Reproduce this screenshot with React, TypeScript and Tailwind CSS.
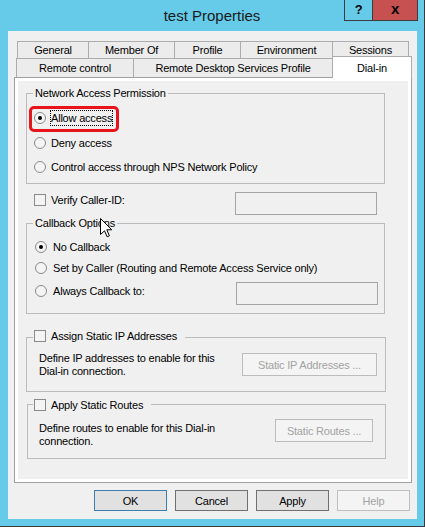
import React from "react";

const font = { fontFamily: '"Liberation Sans", Arial, sans-serif' };

const Radio = ({ checked }: { checked?: boolean }) => (
  <span className="flex h-[12px] w-[12px] shrink-0 items-center justify-center rounded-full border border-[#8a8a8a] bg-[#f4f4f4]">
    {checked && <span className="h-[4px] w-[4px] rounded-full bg-black" />}
  </span>
);

const Check = () => (
  <span className="h-[12px] w-[12px] shrink-0 border border-[#8a8a8a] bg-[#f4f4f4]" />
);

const TextBox = () => <div className="h-[23px] w-[142px] border border-[#a5a5a5] bg-[#f0f0f0]" />;

const DisabledButton = ({ label, className }: { label: string; className: string }) => (
  <div
    className={`flex h-[23px] shrink-0 items-center justify-center border border-[#bcbcbc] bg-[#f4f4f4] text-[#a3a3a3] ${className}`}
  >
    {label}
  </div>
);

const Tab = ({ label, w, h }: { label: string; w: string; h: string }) => (
  <div
    className={`-ml-px flex items-center justify-center border-x border-t border-[#acacac] bg-[#ececec] first:ml-0 ${w} ${h}`}
  >
    {label}
  </div>
);

const Cursor = () => (
  <svg width="13" height="20" viewBox="0 0 13 20" className="absolute left-[100px] top-[218px]">
    <path
      d="M0.5 0.5 L0.5 16.5 L4.5 12.8 L7.2 18.8 L9.4 17.8 L6.8 11.8 L11.8 11.8 Z"
      fill="#fff"
      stroke="#000"
      strokeWidth="1"
    />
  </svg>
);

export default function App() {
  return (
    <div
      className="relative flex h-[527px] w-[425px] flex-col border-r border-b border-[#3a3a3a] bg-[#65cbe9] text-[11px] leading-[14px] tracking-[-0.2px] text-black"
      style={font}
    >
      {/* title bar */}
      <div className="relative flex h-[31px] shrink-0 items-center justify-center">
        <span className="text-[15px] tracking-normal text-[#1a1a1a]">test Properties</span>
        <div className="absolute right-[6px] top-0 flex h-[21px]">
          <div className="flex w-[29px] items-center justify-center border-x border-b border-[#3c3c3c] text-[13px] font-bold">
            ?
          </div>
          <div className="-ml-px flex w-[46px] items-center justify-center border-x border-b border-[#3c3c3c] bg-[#c75050] pb-[2px] text-[15px] font-bold">
            x
          </div>
        </div>
      </div>

      {/* client area */}
      <div className="ml-[8px] flex h-[488px] w-[409px] flex-col bg-[#f0f0f0]">
        {/* tabs */}
        <div className="relative mt-[10px] flex flex-col">
          <div className="flex pl-[9px]">
            <Tab label="General" w="w-[72px]" h="h-[17px]" />
            <Tab label="Member Of" w="w-[87px]" h="h-[17px]" />
            <Tab label="Profile" w="w-[67px]" h="h-[17px]" />
            <Tab label="Environment" w="w-[93px]" h="h-[17px]" />
            <Tab label="Sessions" w="w-[77px]" h="h-[17px]" />
          </div>
          <div className="flex h-[19px] items-end pl-[8px]">
            <Tab label="Remote control" w="w-[118px]" h="h-[19px]" />
            <Tab label="Remote Desktop Services Profile" w="w-[200px]" h="h-[19px]" />
            <div className="relative z-10 -mb-px -ml-px flex h-[22px] w-[80px] items-center justify-center border-x border-t border-[#acacac] bg-white">
              Dial-in
            </div>
          </div>
        </div>

        {/* tab page */}
        <div className="ml-[6px] h-[406px] w-[398px] shrink-0 border border-[#a0a0a0] bg-white p-[3px]">
          <div className="flex h-full flex-col bg-[#f0f0f0] pl-[8px]">
            {/* Network Access Permission */}
            <div className="relative mt-[12px] flex h-[91px] w-[359px] flex-col border border-[#bcbcbc] pl-[7px] pt-[16px]">
              <span className="absolute -top-[8px] left-[6px] bg-[#f0f0f0] px-[2px]">
                Network Access Permission
              </span>
              <div className="flex h-[16px] items-center gap-[5px]">
                <Radio checked />
                <span className="-ml-px border border-dotted border-black">Allow access</span>
              </div>
              <div className="mt-[9px] flex h-[16px] items-center gap-[5px]">
                <Radio />
                <span>Deny access</span>
              </div>
              <div className="mt-[8px] flex h-[16px] items-center gap-[5px]">
                <Radio />
                <span>Control access through NPS Network Policy</span>
              </div>
              <div className="absolute left-[2px] top-[12px] h-[26px] w-[90px] rounded-[5px] border-[3px] border-[#e8141c]" />
            </div>

            {/* Verify Caller-ID */}
            <div className="mt-[8px] flex h-[23px] pl-[8px]">
              <div className="flex h-[16px] w-[201px] items-center gap-[5px]">
                <Check />
                <span>Verify Caller-ID:</span>
              </div>
              <TextBox />
            </div>

            {/* Callback Options */}
            <div className="relative mt-[8px] flex h-[91px] w-[359px] flex-col border border-[#bcbcbc] pl-[8px] pt-[15px]">
              <span className="absolute -top-[8px] left-[6px] bg-[#f0f0f0] px-[2px]">Callback Options</span>
              <div className="flex h-[16px] items-center gap-[6px]">
                <Radio checked />
                <span>No Callback</span>
              </div>
              <div className="mt-[5px] flex h-[16px] items-center gap-[6px]">
                <Radio />
                <span>Set by Caller (Routing and Remote Access Service only)</span>
              </div>
              <div className="mt-[6px] flex h-[23px] items-start">
                <div className="mt-[1px] flex h-[16px] w-[201px] items-center gap-[6px]">
                  <Radio />
                  <span>Always Callback to:</span>
                </div>
                <TextBox />
              </div>
            </div>

            {/* Assign Static IP Addresses */}
            <div className="relative mt-[23px] flex h-[55px] w-[360px] items-start border border-[#bcbcbc] pl-[12px] pt-[14px]">
              <div className="absolute -top-[10px] left-[6px] flex h-[16px] items-center gap-[5px] bg-[#f0f0f0] pl-[1px] pr-[8px]">
                <Check />
                <span>Assign Static IP Addresses</span>
              </div>
              <p className="w-[203px] whitespace-nowrap leading-[13px]">
                Define IP addresses to enable for this
                <br />
                Dial-in connection.
              </p>
              <DisabledButton label="Static IP Addresses ..." className="mt-[1px] w-[135px]" />
            </div>

            {/* Apply Static Routes */}
            <div className="relative ml-[1px] mt-[12px] flex h-[55px] w-[359px] items-start border border-[#bcbcbc] pl-[11px] pt-[14px]">
              <div className="absolute -top-[8px] left-[5px] flex h-[16px] items-center gap-[5px] bg-[#f0f0f0] pl-[1px] pr-[8px]">
                <Check />
                <span>Apply Static Routes</span>
              </div>
              <p className="mt-[3px] w-[236px] whitespace-nowrap leading-[13px]">
                Define routes to enable for this Dial-in
                <br />
                connection.
              </p>
              <DisabledButton label="Static Routes ..." className="w-[98px]" />
            </div>
          </div>
        </div>

        {/* dialog buttons */}
        <div className="ml-[86px] mt-[7px] flex gap-[8px]">
          <div className="flex h-[21px] w-[73px] items-center justify-center border border-[#3c7fb1] bg-[#e1e1e1]">
            OK
          </div>
          <div className="flex h-[21px] w-[73px] items-center justify-center border border-[#707070] bg-[#e1e1e1]">
            Cancel
          </div>
          <div className="flex h-[21px] w-[73px] items-center justify-center border border-[#707070] bg-[#e1e1e1]">
            Apply
          </div>
          <div className="flex h-[21px] w-[73px] items-center justify-center border border-[#bfbfbf] bg-[#f4f4f4] text-[#a3a3a3]">
            Help
          </div>
        </div>
      </div>

      <Cursor />
    </div>
  );
}
